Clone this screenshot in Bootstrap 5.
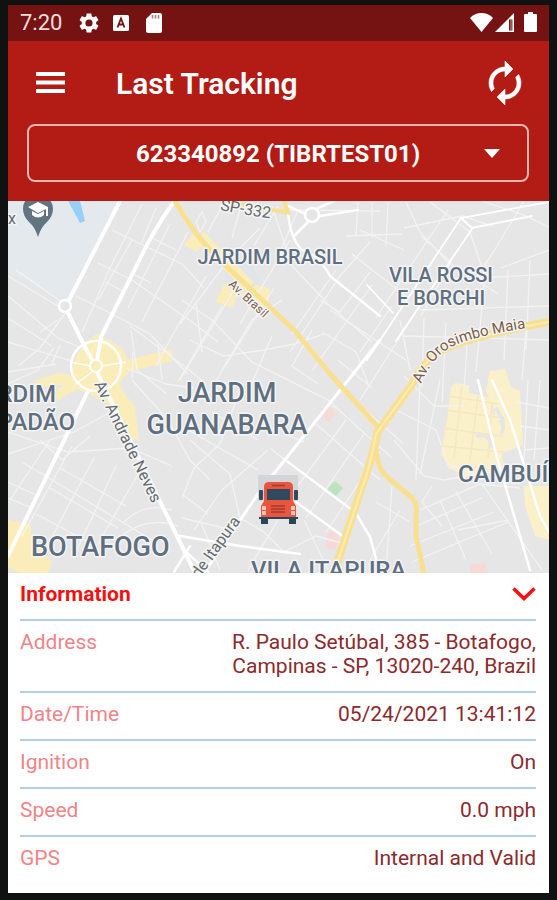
<!DOCTYPE html>
<html lang="en">
<head>
<meta charset="utf-8">
<meta name="viewport" content="width=device-width, initial-scale=1">
<title>Last Tracking</title>
<link href="https://cdn.jsdelivr.net/npm/bootstrap@5.3.0/dist/css/bootstrap.min.css" rel="stylesheet">
<style>
  body { background: #0f1211; font-family: Roboto, "Liberation Sans", sans-serif; }
  .phone { margin: 5px 8px 7px; background: #fff; }
  .status { background: #751313; color: #f6dede; height: 36px; padding: 0 11px 0 12px; font-size: 22px; line-height: 36px; }
  .status svg, .app-head svg, .info-toggle svg { display: block; }
  .app-head { background: #b31b15; color: #fff; padding: 0 20px 19px 19px; }
  .tool-row { height: 83px; }
  .icon-btn { background: none; border: 0; color: #fff; padding: 0; }
  .app-title { font-size: 30px; font-weight: 600; line-height: 36px; margin: 0 0 0 50px; padding-top: 2px; }
  .device-pick {
    --bs-form-select-bg-img: url("data:image/svg+xml,%3csvg xmlns='http://www.w3.org/2000/svg' viewBox='0 0 16 9'%3e%3cpath fill='%23fff' d='M0 0h16L8 9z'/%3e%3c/svg%3e");
    background-color: transparent; background-image: var(--bs-form-select-bg-img);
    background-position: right 27px center; background-size: 16px 9px;
    border: 2px solid #eeb5b0; border-radius: 8px; color: #fff;
    height: 58px; padding: 2px 44px 0; font-family: Roboto, "Liberation Sans", sans-serif; font-size: 24px; font-weight: 700; text-align-last: center;
  }
  .device-pick option { color: #222; }
  .map-view text { font-family: Roboto, "Liberation Sans", sans-serif; paint-order: stroke; stroke: #f4f5f6; stroke-width: 3px; stroke-linejoin: round; }
  .area { fill: #5f6f80; font-weight: 500; }
  .area-lg { font-size: 27px; }
  .area-md { font-size: 24px; }
  .area-sm { font-size: 20px; }
  .way { fill: #666a6d; font-size: 16px; }
  .way-main { fill: #7d5b45; font-size: 15px; }
  .way-minor { font-size: 12px; }
  .info { padding: 0 13px 10px 12px; font-size: 21px; line-height: 24px; }
  .info-toggle { background: none; border: 0; color: #f50f0f; font-size: 21px; font-weight: 700; line-height: 24px; }
  .info-row { padding: 9px 0 13px; border-bottom: 2px solid #b3d0e5; }
  .info-list > .info-row:last-child { border-bottom: 0; }
  .info dt { color: #f08488; font-weight: 400; }
  .info dd { color: #8c2a2c; max-width: 310px; }
</style>
</head>
<body>
<main class="phone">
  <div class="status d-flex align-items-center">
    <span>7:20</span>
    <svg class="ms-3" width="22" height="24" viewBox="1 0 22 24" fill="#fff"><path d="M19.14 12.94c.04-.3.06-.61.06-.94s-.02-.64-.07-.94l2.03-1.58c.18-.14.23-.41.12-.61l-1.92-3.32c-.12-.22-.37-.29-.59-.22l-2.39.96c-.5-.38-1.03-.7-1.62-.94l-.36-2.54c-.04-.24-.24-.41-.48-.41h-3.84c-.24 0-.43.17-.47.41l-.36 2.54c-.59.24-1.13.57-1.62.94l-2.39-.96c-.22-.08-.47 0-.59.22L2.74 8.87c-.12.21-.08.47.12.61l2.03 1.58c-.05.3-.09.63-.09.94s.02.64.07.94l-2.03 1.58c-.18.14-.23.41-.12.61l1.92 3.32c.12.22.37.29.59.22l2.39-.96c.5.38 1.03.7 1.62.94l.36 2.54c.05.24.24.41.48.41h3.84c.24 0 .44-.17.47-.41l.36-2.54c.59-.24 1.13-.56 1.62-.94l2.39.96c.22.08.47 0 .59-.22l1.92-3.32c.12-.22.07-.47-.12-.61zM12 15.6A3.6 3.6 0 1 1 12 8.400a3.600 3.600 0 0 1 0 7.200z"/></svg>
    <svg class="ms-2" width="24" height="24" viewBox="0 0 24 24"><rect x="5" y="4" width="16" height="16" rx="1.500" fill="#fff"/><path d="M9.500 16.500 13 7.500l3.500 9M10.700 13.500h4.600" fill="none" stroke="#751313" stroke-width="1.800"/></svg>
    <svg class="ms-2" width="24" height="24" viewBox="-2 0 24 24"><path fill="#fff" d="M18 2h-8L4 8v12c0 1.100.9 2 2 2h12c1.100 0 2-.9 2-2V4c0-1.100-.9-2-2-2z"/><path d="M10.500 4v3.500M13.500 4v3.500M16.500 4v3.500" stroke="#a98080" stroke-width="1.600"/></svg>
    <svg class="ms-auto" width="68" height="24" viewBox="0 0 68 24" fill="#fff"><path d="M0 7C3 3.500 7 2 11.500 2S20 3.500 23 7L11.500 21z"/><path d="M25 21 44 2v19z"/><path d="M39 8.500h3.400v11H39z" fill="#751313"/><path d="M40.500 7.500h1v12h-1z" fill="#c99"/><path d="M55 3h3V1h5v2h3q1 0 1 1v16q0 1-1 1H55q-1 0-1-1V4q0-1 1-1z"/></svg>
  </div>

  <header class="app-head">
    <div class="tool-row d-flex align-items-center">
      <button class="icon-btn ms-2" type="button" aria-label="Menu"><svg width="31" height="22" viewBox="0 0 31 22" fill="currentColor"><path d="M1 0h29v4H1zM1 8.500h29v4H1zM1 17h29v4H1z"/></svg></button>
      <h1 class="app-title">Last Tracking</h1>
      <button class="icon-btn ms-auto" type="button" aria-label="Refresh"><svg width="48" height="48" viewBox="0 0 24 24" fill="currentColor"><path d="M12 6v3l4-4-4-4v3c-4.420 0-8 3.580-8 8 0 1.570.46 3.030 1.240 4.260L6.700 14.800c-.45-.83-.7-1.790-.7-2.800 0-3.310 2.690-6 6-6zm6.760 1.740L17.300 9.200c.44.840.7 1.790.7 2.800 0 3.310-2.690 6-6 6v-3l-4 4 4 4v-3c4.420 0 8-3.580 8-8 0-1.570-.46-3.030-1.240-4.260z" stroke="currentColor" stroke-width=".3"/></svg></button>
    </div>
    <select class="form-select device-pick" id="device" aria-label="Device"><option>623340892 (TIBRTEST01)</option></select>
  </header>

  <svg class="map-view d-block w-100" viewBox="8 201 541 372" role="img" aria-label="Map of the last position">
    <path fill="#e6e6e7" d="M8 201h541v372H8z"/>
    <!-- campus and water -->
    <path fill="#e4e9ed" d="M8 201h111L69 300 8 272z"/>
    <path fill="#96cffa" d="M68 201h12l5 20-5 2z"/>
    <path fill="#e0e4eb" d="M236 258l18 10 6 16-20 6-16-14z"/>
    <!-- built-up zones -->
    <g fill="#fbedb9">
      <path d="M78 352l18-18 12 6 14 8 6 12 44-11 1 12-42 10-12 12 4 8 12 16 4 34-9-4-16-28-22-14-14-6-12 6-8 6-6-8 12-8-28 2-2-6 24-8 12 2z"/>
      <path d="M193 234l10 10-6 8-13-7zM204 232l50 50-8 10-50-52zM224 284l14 10-6 14-16-6zM256 285l14 4-2 18-14 4-14-16z"/>
      <path d="M8 520l22 4 2 16 20 22-4 11H20l-12-6z"/>
    </g>
    <g fill="#faf0c9">
      <path d="M455 383l14 2 0 8 22 5 2 16 12 10-6 14 6 34-40 4-16-8-8-14 6-34 4-32zM490 371l15-2 6 18 9 4 3 54-20 8-12-20 4-22-9-20z"/>
      <path d="M524 486h25v54l-14-4-10-30z"/>
    </g>
    <path fill="#f7d9d7" d="M321 410l9-3 6 8-9 7zM327 534l8-4 4 8-4 12-9-2zM471 565l14-2 3 10h-18z"/>

    <!-- side streets -->
    <g fill="none" stroke="#f3f3f3" stroke-width="1.300">
      <path d="M112 230l70 34 22 24M98 263l34 17 60 42 26 20M76 296l40 20 34 18 38 40M142 204l-34 68-12 28-14 32M132 240l-34 60M156 208l-14 34M170 224l-42 84M188 232l-46 90M206 276l-34 60-16 30M222 306l-44 76M152 238l24 12M105 282l20 10 8-18 18 9M130 326l54 40 20 16"/>
      <path d="M8 276l50 30M8 296l50 42 28 12M8 318l44 28M8 342l64 19M16 270l46 32M66 312l-26 36-22 18M40 332l18-12M8 372l48-8M8 384l30-14 16-22M131 330l6 40 30 24M60 345l-8 18"/>
      <path d="M126 368l40 16 28 4M133 352l-1 26M158 344l4 36M132 380l36 40 22 40 20 20M118 408l-44 24-36 12-30 10M8 432l60 20 62-4 42 18M22 462l70 42 60 36M40 440l22 20 28-24M50 440l-40 60M72 446l-50 90M94 458l-48 90M116 466l-40 86M138 474l-40 70M60 468l66 38M50 488l68 40M36 514l60 32M124 522q20-20 48-12M124 534q26-18 54-8M8 482l30 14"/>
      <path d="M182 300l30 20 40 42 80 40M190 340l34 16 40-6 30-6 30-10M204 400l50-80 20-32M180 380l60-100M222 370l30-50 30-20M180 324l50-66 30-30M196 222l6-10 4 10-6 10zM208 232l16-30M232 238l10-36M254 246l24-40M278 256l20-46M202 352l-6-50M290 352l50-76 30-34M272 336l-24 56M312 330l-20 36 26 18M320 300l20 12 30-40M272 206l20 60 38 40 42 36M290 210l90 1M346 236l56-2M358 202l-2 34M372 202v36M388 202l-2 44"/>
      <path d="M290 240l-36 60-14 24M322 332l34 20 12 32M336 270l-44 64M352 254l56 44M330 310l76 50M372 285l-60 86M392 306l-32 46M338 360l34 28"/>
      <path d="M376 318l72-108M360 400l66-104M404 228l58-12 30 10M406 202l14 30 28 30 50 32M430 202l24 18 16 12 12 36M482 201l42 14 25 12M524 201l-30 50-20 30M549 250l-48 18M486 262l-10 110M508 270l-4 90M530 260l-4 90M444 280l105-6M420 310l129-4M404 336l145 4M400 320l10 50M424 318l-2 70M446 322l-4 80M468 330l-4 60M526 330l-4 50M404 250l-44-20M421 236l30 26-30 54"/>
      <path d="M8 498l24 10M240 390l-20 54-26 24-12 30M190 440l40 34 10 44-20 12M212 412l46 28M268 450l-46 40-28 40M258 470l-70-40M270 448l30 24M330 402l62 56M342 390l62 54M316 424l64 56M304 442l-14-6M346 420l-60 82M364 434l-58 84M380 452l-54 80M240 518l24 14 20 20 32-16 30 8M200 520l20 50M182 518l42 10M278 520l-30 50M304 520l24 50M182 494l26 20"/>
      <path d="M396 410l40 20 12 34 30 12M394 440l30 36 20 4M420 380l-4 100M440 380l-20 94M404 376l30 30h30M432 486l-10 16 20 24M444 480l80-14M420 510l60-26 40 4M416 526l66-28M410 546l84-34M412 562l96-40M440 500l26 60M456 492l36 62M482 484l60 86M392 486l-6 86M400 510l-30 50M376 502l34 20M508 520l-50 10M516 402l33 6M520 426l29 4M524 450l25-2M528 380l-4 80M540 380l-6 80"/>
    </g>
    <path fill="#bde3bd" d="M335 481l8 7-7 8-9-7z"/>
    <!-- blocks inside the eastern zone -->
    <g fill="none" stroke="#f5e7c4" stroke-width="1.500"><path d="M448 396l50 8M446 410l56 8M442 428l60 8M442 446l62 6M462 386l-8 72M478 396l-8 64M492 404l-4 54"/></g>
    <path fill="none" stroke="#e6e6e7" stroke-width="4" d="M476 436q14-4 16 12M496 408l8 14M500 420q6 6 1 14"/>

    <!-- avenues -->
    <g fill="none" stroke="#fff" stroke-linecap="round">
      <path stroke-width="4" d="M120 201L69 300M173 203q-20 28-34 58l-38 76-4 24M68 313l17 34 10 18"/>
      <path stroke-width="4" d="M88 391L8 556M97 372l98 201"/>
      <path stroke-width="3" d="M380 340L284 461l-24 30-56 82"/>
      <path stroke-width="2.500" d="M284 459l72 54 14 24 10 36M296 502l52 38"/>
      <path stroke-width="2.500" d="M288 212q2 26 14 38 18 6 28 26l50 40M288 206l22 10M320 216l38-6M318 208l16-7M308 222l-14 14"/>
      <path stroke-width="1.800" d="M549 202l-88 16-94 142M472 229l-76 112M461 218l11 10 60-12M367 285l26 28"/>
      <path stroke-width="2.500" d="M478 380l18 74 34 116M492 380l18 40 30 96 9 16M180 536l60 10 60 8M182 548l26 24M190 546l-16 26"/>
    </g>
    <g fill="none" stroke="#fff">
      <circle cx="65" cy="306" r="6" stroke-width="2.500" fill="#e6e6e7"/>
      <circle cx="96" cy="366" r="25" stroke-width="2.500"/>
      <circle cx="96" cy="366" r="6" stroke-width="2" fill="#fbedb9"/>
      <circle cx="312" cy="215" r="7" stroke-width="2.500" fill="#e6e6e7"/>
      <path stroke-width="1.500" d="M71 362l19 4M102 366l24-4M84 346l8 14M92 372l-16 12M100 342l-2 18"/>
    </g>
    <g fill="none" stroke="#f8e08f" stroke-linejoin="round">
      <path stroke-width="5" d="M175 201q20 36 50 64l70 66 36 44 48 53"/>
      <path stroke-width="4" d="M220 201l38 6 32 6M284 201l4 12"/>
      <path stroke-width="8" d="M549 322q-88 16-110 30-18 12-28 34l-35 48"/>
      <path stroke-width="8" d="M378 430q-6 30-16 56l-28 87"/>
      <path stroke-width="5" d="M376 434q-2 30 10 42l24 20q8 6 6 18v22l8 37"/>
    </g>
    <path fill="none" stroke="#fcebb6" stroke-width="2" d="M549 322q-88 16-110 30-18 12-28 34l-35 48q-6 34-14 54l-28 85"/>

    <!-- place names -->
    <g class="area">
      <g class="area-lg">
        <text x="227" y="402" text-anchor="middle">JARDIM</text>
        <text x="227" y="434" text-anchor="middle">GUANABARA</text>
        <text x="31" y="556">BOTAFOGO</text>
      </g>
      <g class="area-md">
        <text x="56" y="402" text-anchor="end">RDIM</text>
        <text x="75" y="430" text-anchor="end">PADÃO</text>
        <text x="458" y="482">CAMBUÍ</text>
        <text x="251" y="578">VILA ITAPURA</text>
      </g>
      <g class="area-sm">
        <text x="270" y="264" text-anchor="middle">JARDIM BRASIL</text>
        <text x="441" y="282" text-anchor="middle">VILA ROSSI</text>
        <text x="441" y="305" text-anchor="middle">E BORCHI</text>
      </g>
    </g>
    <defs>
      <path id="wayMaia" d="M421 384q12-29 34-39 30-12 94-20"/>
      <path id="waySp" d="M220 210q20 4 60 10"/>
      <path id="wayNeves" d="M94 384L160 520"/>
      <path id="wayItapura" d="M199 579l60-83"/>
      <path id="wayBrasil" d="M228 285l60 56"/>
    </defs>
    <text class="way-main"><textPath href="#wayMaia">Av. Orosimbo Maia</textPath></text>
    <text class="way"><textPath href="#waySp">SP-332</textPath></text>
    <text class="way"><textPath href="#wayNeves">Av. Andrade Neves</textPath></text>
    <text class="way"><textPath href="#wayItapura">de Itapura</textPath></text>
    <text class="way-main way-minor"><textPath href="#wayBrasil">Av. Brasil</textPath></text>
    <text class="way" x="8" y="224">x</text>

    <!-- university pin -->
    <path fill="#607482" d="M38 237q-3-10-9-15-6-6-6-13 0-8 6-12h18q6 5 6 12 0 7-6 13-6 5-9 15z"/>
    <path fill="#fff" d="M38 202l-10 5 10 6 8-4v7h2v-9zM32 211v4q6 5 12 0v-4l-6 3z"/>

    <!-- vehicle -->
    <path fill="#d3d5d9" d="M258 475h40v26h-40z"/>
    <g>
      <path fill="#2b4558" d="M261 518h7v6h-7zM289 518h7v6h-7z"/>
      <rect x="259" y="490" width="4" height="10" rx="1" fill="#34495c"/>
      <rect x="294" y="490" width="4" height="10" rx="1" fill="#34495c"/>
      <path fill="#e9553f" d="M264 487q0-5 5-5h19q5 0 5 5v14l3 5v12h-35v-12l3-5z"/>
      <path fill="#2f4a5f" d="M267 489h23v11h-23z"/>
      <path stroke="#a13b30" stroke-width="1.500" d="M272 485.500h13M271 506h14M271 509h14M271 512h14"/>
      <path fill="#f8c7b8" d="M262 506h4v4h-4zM262 511h4v4h-4zM291 506h4v4h-4zM291 511h4v4h-4z"/>
      <path fill="#2b4558" d="M259 517h39v2h-39z"/>
    </g>
  </svg>

  <section class="info">
    <button class="info-toggle info-row d-flex w-100 justify-content-between align-items-center" type="button" aria-expanded="true" aria-controls="infoList">
      <span>Information</span>
      <svg width="24" height="16" viewBox="0 0 24 16" fill="none" stroke="currentColor" stroke-width="3.500"><path d="M1.500 2.500 12 12.500l10.500-10"/></svg>
    </button>
    <dl class="info-list mb-0" id="infoList">
      <div class="info-row d-flex justify-content-between"><dt>Address</dt><dd class="mb-0 text-end">R. Paulo Setúbal, 385 - Botafogo, Campinas - SP, 13020-240, Brazil</dd></div>
      <div class="info-row d-flex justify-content-between"><dt>Date/Time</dt><dd class="mb-0 text-end">05/24/2021 13:41:12</dd></div>
      <div class="info-row d-flex justify-content-between"><dt>Ignition</dt><dd class="mb-0 text-end">On</dd></div>
      <div class="info-row d-flex justify-content-between"><dt>Speed</dt><dd class="mb-0 text-end">0.0 mph</dd></div>
      <div class="info-row d-flex justify-content-between"><dt>GPS</dt><dd class="mb-0 text-end">Internal and Valid</dd></div>
    </dl>
  </section>
</main>
<script src="https://cdn.jsdelivr.net/npm/bootstrap@5.3.0/dist/js/bootstrap.bundle.min.js"></script>
</body>
</html>
